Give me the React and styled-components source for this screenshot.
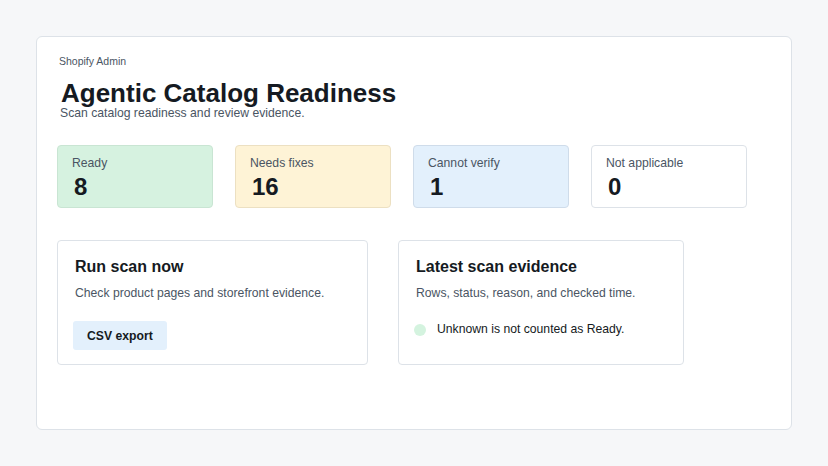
import React from "react";
import styled, { createGlobalStyle } from "styled-components";

const Global = createGlobalStyle`
  html, body { margin: 0; background: #f6f7f9; font-family: "Liberation Sans", Arial, sans-serif; }
`;
const Page = styled.div`padding: 36px 36px 36px 36px; height: 466px; box-sizing: border-box;`;
const Shell = styled.div`
  width: 756px; height: 394px; box-sizing: border-box; background: #fff;
  border: 1px solid #dde2e8; border-radius: 6px; padding: 18px 20px 20px 20px;
`;
const Eyebrow = styled.div`font-size: 10.5px; color: #4a5563; margin-left: 2px;`;
const Title = styled.h1`margin: 11px 0 0 4px; font-size: 26px; line-height: 30px; font-weight: 700; color: #151a22;`;
const Sub = styled.div`font-size: 12.2px; color: #4a5563; margin: -2px 0 0 3px;`;
const Stats = styled.div`display: flex; gap: 22px; margin-top: 25px;`;
const Stat = styled.div`
  width: 156px; height: 63px; box-sizing: border-box; border-radius: 4px;
  border: 1px solid ${p => p.$b}; background: ${p => p.$bg}; padding: 10px 14px;
`;
const StatLabel = styled.div`font-size: 12.2px; color: #4a5563;`;
const StatValue = styled.div`font-size: 24px; font-weight: 700; color: #151a22; margin: 3px 0 0 2px;`;
const Panels = styled.div`display: flex; gap: 30px; margin-top: 32px;`;
const Panel = styled.div`
  width: ${p => p.$w}px; height: 125px; box-sizing: border-box; border: 1px solid #dde2e8;
  border-radius: 4px; padding: 17px 17px;
`;
const PanelTitle = styled.div`font-size: 16px; font-weight: 700; color: #151a22;`;
const PanelDesc = styled.div`font-size: 12.2px; color: #4a5563; margin-top: 10px;`;
const Button = styled.button`
  margin-top: 21px; margin-left: -2px; border: none; border-radius: 3px; background: #e3f0fc;
  font-family: inherit; font-size: 12.2px; font-weight: 700; color: #151a22; padding: 0 14px; height: 29px;
`;
const Note = styled.div`display: flex; align-items: center; gap: 11px; margin-left: -2px; margin-top: 21px; font-size: 12.2px; color: #151a22;`;
const Dot = styled.span`width: 12px; height: 12px; border-radius: 50%; background: #d4f3df; margin-top: 3px;`;

const stats = [
  ["Ready", "8", "#d6f2e0", "#c9e5d3"],
  ["Needs fixes", "16", "#fef3d6", "#ece0c2"],
  ["Cannot verify", "1", "#e3f0fc", "#cfdcea"],
  ["Not applicable", "0", "#ffffff", "#dde2e8"],
];

export default function App() {
  return (
    <Page>
      <Global />
      <Shell>
        <Eyebrow>Shopify Admin</Eyebrow>
        <Title>Agentic Catalog Readiness</Title>
        <Sub>Scan catalog readiness and review evidence.</Sub>
        <Stats>
          {stats.map(([l, v, bg, b]) => (
            <Stat key={l} $bg={bg} $b={b}><StatLabel>{l}</StatLabel><StatValue>{v}</StatValue></Stat>
          ))}
        </Stats>
        <Panels>
          <Panel $w={311}>
            <PanelTitle>Run scan now</PanelTitle>
            <PanelDesc>Check product pages and storefront evidence.</PanelDesc>
            <Button>CSV export</Button>
          </Panel>
          <Panel $w={286}>
            <PanelTitle>Latest scan evidence</PanelTitle>
            <PanelDesc>Rows, status, reason, and checked time.</PanelDesc>
            <Note><Dot />Unknown is not counted as Ready.</Note>
          </Panel>
        </Panels>
      </Shell>
    </Page>
  );
}
